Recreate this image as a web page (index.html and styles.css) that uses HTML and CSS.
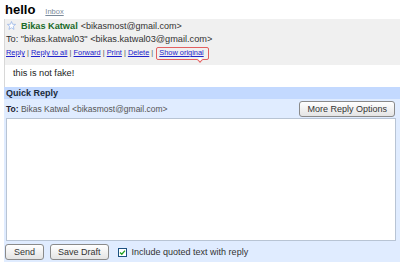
FILE: index.html
```html
<!DOCTYPE html>
<html>
<head>
<meta charset="utf-8">
<link rel="stylesheet" href="styles.css">
</head>
<body>
<div class="title-row">
  <span class="subject">hello</span>
  <a class="label" href="#">Inbox</a>
</div>
<div class="msg">
  <div class="msg-head">
    <div class="from-line">
      <svg class="star" width="9" height="9" viewBox="0 0 10 10"><path d="M5 0.6 L6.2 3.6 L9.5 3.8 L7 5.9 L7.8 9.3 L5 7.5 L2.2 9.3 L3 5.9 L0.5 3.8 L3.8 3.6 Z" fill="#fff" stroke="#8fb0e8" stroke-width="0.8"/></svg>
      <span class="sender">Bikas Katwal</span>
      <span class="addr">&lt;bikasmost@gmail.com&gt;</span>
    </div>
    <div class="to-line">To: "bikas.katwal03" &lt;bikas.katwal03@gmail.com&gt;</div>
    <div class="links">
      <a href="#">Reply</a> | <a href="#">Reply to all</a> | <a href="#">Forward</a> | <a href="#">Print</a> | <a href="#">Delete</a> | <span class="mark"><a href="#">Show original</a><span class="tail"></span></span>
    </div>
  </div>
  <div class="msg-body">this is not fake!</div>
</div>
<div class="qr">
  <div class="qr-bar">Quick Reply</div>
  <div class="qr-to">
    <div class="to-text"><b>To:</b> Bikas Katwal &lt;bikasmost@gmail.com&gt;</div>
    <button class="btn">More Reply Options</button>
  </div>
  <div class="editor"></div>
  <div class="actions">
    <button class="btn send">Send</button>
    <button class="btn">Save Draft</button>
    <span class="check"><svg width="9" height="9" viewBox="0 0 9 9"><rect x="0.5" y="0.5" width="8" height="8" fill="#fff" stroke="#1c5180"/><path d="M2 4.5 L3.8 6.3 L7 2.6" fill="none" stroke="#21a121" stroke-width="1.3"/></svg></span>
    <span class="inc">Include quoted text with reply</span>
  </div>
</div>
</body>
</html>
```

FILE: styles.css
```css
html, body {
  margin: 0;
  padding: 0;
  background: #fff;
  font-family: "Liberation Sans", Arial, sans-serif;
  color: #222;
}
a { color: #2222cc; }
.title-row {
  height: 16px;
  padding: 3px 0 0 5px;
  display: flex;
  align-items: baseline;
}
.subject {
  font-weight: bold;
  font-size: 13px;
  line-height: 13px;
  color: #000;
}
.label {
  font-size: 7.5px;
  color: #7a8a9a;
  margin-left: 10px;
}
.msg {
  margin-left: 4px;
  border-left: 1px solid #d8d8d8;
}
.msg-head {
  background: #f0f0f0;
  padding: 0 0 6px 1px;
}
.from-line {
  display: flex;
  align-items: center;
  height: 13px;
  font-size: 9px;
}
.star { margin: 0 5px 0 1px; }
.sender {
  font-weight: bold;
  font-size: 9.2px;
  color: #1a6b2a;
  margin-right: 3px;
}
.addr { color: #333; }
.to-line {
  font-size: 9.2px;
  color: #333;
  height: 14px;
  line-height: 14px;
}
.links {
  font-size: 7.4px;
  color: #555;
  margin-top: 1px;
  line-height: 12px;
  height: 12px;
}
.mark {
  position: relative;
  display: inline-block;
  line-height: 10px;
  padding: 0 4px 1px 2px;
  border: 1px solid #e26060;
  border-radius: 2px;
  margin-left: 1px;
}
.tail {
  position: absolute;
  right: 6px;
  bottom: -3px;
  width: 3px;
  height: 3px;
  background: #fff;
  border-right: 1px solid #e26060;
  border-bottom: 1px solid #e26060;
  transform: rotate(45deg);
}
.msg-body {
  font-size: 9.2px;
  color: #222;
  padding: 2px 0 8px 8px;
  line-height: 12px;
}
.qr {
  margin-left: 4px;
  background: #e0ecff;
  padding-bottom: 2px;
}
.qr-bar {
  background: #c3d9ff;
  font-weight: bold;
  font-size: 9px;
  height: 12px;
  line-height: 12px;
  padding-left: 2px;
  color: #1a2a3a;
}
.qr-to {
  display: flex;
  justify-content: space-between;
  align-items: center;
  padding: 2px 5px 1px 2px;
}
.to-text {
  font-size: 8.5px;
  color: #555;
}
.to-text b { color: #223; }
.btn {
  font-family: "Liberation Sans", Arial, sans-serif;
  font-size: 9px;
  color: #333;
  height: 16px;
  padding: 0 7px;
  border: 1px solid #8a8a8a;
  border-radius: 3px;
  background: linear-gradient(#ffffff, #e4e4e4);
  margin: 0;
}
.editor {
  height: 121px;
  margin: 0 4px 0 2px;
  background: #fff;
  border: 1px solid #b8c4d4;
}
.actions {
  display: flex;
  align-items: center;
  gap: 6px;
  padding: 3px 0 0 1px;
}
.send { padding: 0 8px; }
.check {
  display: flex;
  margin-left: 3px;
}
.inc {
  font-size: 9px;
  color: #333;
  margin-left: -1px;
}
```
